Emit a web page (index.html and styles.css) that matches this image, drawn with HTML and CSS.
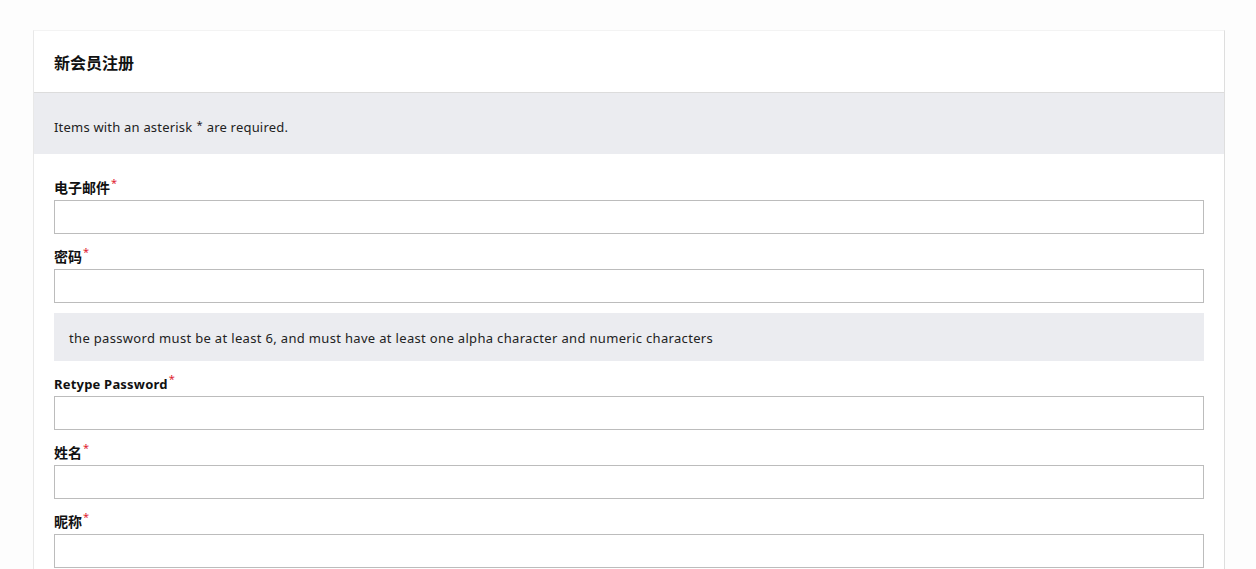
FILE: index.html
```html
<!DOCTYPE html>
<html lang="zh">
<head>
<meta charset="utf-8">
<title>新会员注册</title>
<link rel="stylesheet" href="styles.css">
</head>
<body>
<div class="card">
  <div class="card-header">新会员注册</div>
  <div class="notice">Items with an asterisk <sup>*</sup> are required.</div>
  <div class="card-body">
    <div class="field">
      <label class="label"><span class="zh">电子邮件</span><span class="req">*</span></label>
      <input class="input" type="text">
    </div>
    <div class="field">
      <label class="label"><span class="zh">密码</span><span class="req">*</span></label>
      <input class="input" type="password">
    </div>
    <div class="help">the password must be at least 6, and must have at least one alpha character and numeric characters</div>
    <div class="field">
      <label class="label">Retype Password<span class="req">*</span></label>
      <input class="input" type="password">
    </div>
    <div class="field">
      <label class="label"><span class="zh">姓名</span><span class="req">*</span></label>
      <input class="input" type="text">
    </div>
    <div class="field">
      <label class="label"><span class="zh">昵称</span><span class="req">*</span></label>
      <input class="input" type="text">
    </div>
  </div>
</div>
</body>
</html>
```

FILE: styles.css
```css
html, body {
  margin: 0;
  padding: 0;
  background: #fdfdfd;
}
body {
  font-family: "Noto Sans", "Noto Sans CJK SC", sans-serif;
  color: #222;
  padding: 30px 31px 0 33px;
}
.card {
  background: #fff;
  border: 1px solid #e8e8e8;
  border-top-color: #f3f3f3;
  border-right-color: #dedede;
}
.card-header {
  height: 62px;
  box-sizing: border-box;
  padding: 0 20px;
  display: flex;
  align-items: center;
  font-size: 16px;
  font-weight: 700;
  color: #111;
  border-bottom: 1px solid #dcdcdc;
}
.notice {
  background: #ebecf0;
  height: 61px;
  box-sizing: border-box;
  padding: 6px 20px 0;
  display: flex;
  align-items: center;
  font-size: 13px;
  letter-spacing: 0.2px;
  color: #222;
}
.notice sup {
  font-size: 11px;
  margin: 0 4px 0 4px;
  position: relative;
  top: -2px;
}
.card-body {
  padding: 11px 20px 20px;
}
.field {
  display: flex;
  flex-direction: column;
}
.label {
  margin-top: 9px;
  height: 18px;
  line-height: 18px;
  margin-bottom: 8px;
  font-size: 13px;
  letter-spacing: 0.2px;
  font-weight: 700;
  color: #111;
}
.zh {
  font-size: 14px;
  letter-spacing: 0;
}
.req {
  color: #e0232f;
  font-size: 11px;
  vertical-align: 6px;
  margin-left: 1px;
  font-weight: 400;
}
.input {
  display: block;
  width: 100%;
  box-sizing: border-box;
  height: 34px;
  border: 1px solid #bcbcbc;
  background: #fff;
  margin: 0;
  padding: 0 8px;
  border-radius: 0;
}
.help {
  margin-top: 10px;
  height: 48px;
  box-sizing: border-box;
  background: #ebecf0;
  display: flex;
  align-items: center;
  padding: 2px 15px 0;
  font-size: 13px;
  letter-spacing: 0.33px;
  color: #222;
}
```
